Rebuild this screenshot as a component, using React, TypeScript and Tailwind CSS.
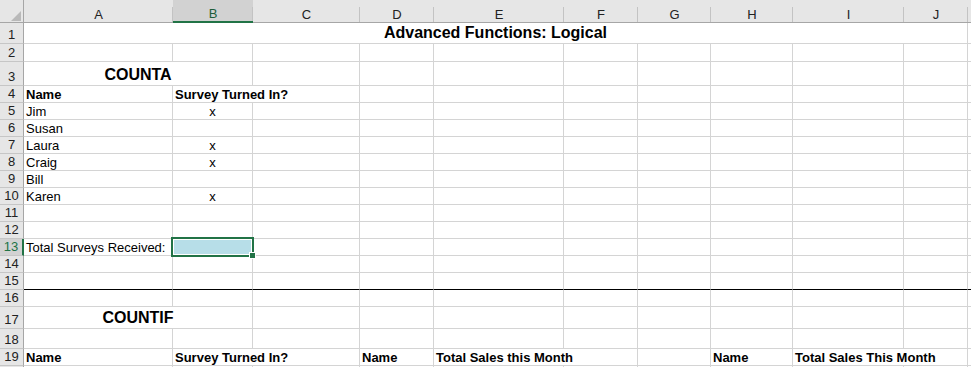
import React from 'react';

type Cell = { text?: string; span?: number; bold?: boolean; center?: boolean; big?: boolean };

const COLS = ['A', 'B', 'C', 'D', 'E', 'F', 'G', 'H', 'I', 'J', ''];

const SPAN: Record<number, string> = {
  1: 'col-span-1',
  2: 'col-span-2',
  10: 'col-span-10',
};

// row heights include the 1px bottom gridline
const ROWS: { h: string; cells: Record<number, Cell> }[] = [
  { h: 'h-[21px]', cells: { 0: { text: 'Advanced Functions: Logical', span: 10, bold: true, center: true, big: true } } },
  { h: 'h-[18px]', cells: {} },
  { h: 'h-[24px]', cells: { 0: { text: 'COUNTA', span: 2, bold: true, center: true, big: true } } },
  { h: 'h-[17px]', cells: { 0: { text: 'Name', bold: true }, 1: { text: 'Survey Turned In?', span: 2, bold: true } } },
  { h: 'h-[17px]', cells: { 0: { text: 'Jim' }, 1: { text: 'x', center: true } } },
  { h: 'h-[17px]', cells: { 0: { text: 'Susan' } } },
  { h: 'h-[17px]', cells: { 0: { text: 'Laura' }, 1: { text: 'x', center: true } } },
  { h: 'h-[17px]', cells: { 0: { text: 'Craig' }, 1: { text: 'x', center: true } } },
  { h: 'h-[17px]', cells: { 0: { text: 'Bill' } } },
  { h: 'h-[17px]', cells: { 0: { text: 'Karen' }, 1: { text: 'x', center: true } } },
  { h: 'h-[17px]', cells: {} },
  { h: 'h-[17px]', cells: {} },
  { h: 'h-[17px]', cells: { 0: { text: 'Total Surveys Received:' } } },
  { h: 'h-[17px]', cells: {} },
  { h: 'h-[17px]', cells: {} },
  { h: 'h-[17px]', cells: {} },
  { h: 'h-[22px]', cells: { 0: { text: 'COUNTIF', span: 2, bold: true, center: true, big: true } } },
  { h: 'h-[20px]', cells: {} },
  {
    h: 'h-[17px]',
    cells: {
      0: { text: 'Name', bold: true },
      1: { text: 'Survey Turned In?', span: 2, bold: true },
      3: { text: 'Name', bold: true },
      4: { text: 'Total Sales this Month', span: 2, bold: true },
      7: { text: 'Name', bold: true },
      8: { text: 'Total Sales This Month', span: 2, bold: true },
    },
  },
  { h: 'h-[17px]', cells: {} },
];

const SEL_ROW = 13;
const SEL_COL = 1;
const VISIBLE_ROWS = 19; // row 20 only peeks in at the bottom edge

function ColHeader({ label, active }: { label: string; active: boolean }) {
  return (
    <div
      className={`relative flex items-end justify-center h-[23px] text-[13px] leading-[15px] ${
        active
          ? 'bg-[#d2d2d2] border-b-2 border-[#217346] text-[#1e5e3a]'
          : 'bg-[#e6e6e6] border-b border-[#a6a6a6] text-[#222]'
      }`}
    >
      <span>{label}</span>
      <span className="absolute right-0 top-[7px] bottom-0 w-px bg-[#c3c3c3]" />
    </div>
  );
}

export default function App() {
  return (
    <div className="relative w-[971px] h-[367px] overflow-hidden bg-white font-['Liberation_Sans',Arial,sans-serif]">
      <div className="grid grid-cols-[24px_149px_80px_107px_74px_130px_74px_73px_82px_111px_64px_1fr]">
        {/* corner */}
        <div className="relative h-[23px] bg-[#e6e6e6] border-b border-r border-[#a6a6a6]">
          <svg className="absolute left-[11px] top-[11px]" width="11" height="11" viewBox="0 0 11 11">
            <polygon points="10,0 10,10 0,10" fill="#b9b9b9" />
          </svg>
        </div>
        {COLS.map((c, i) => (
          <ColHeader key={i} label={c} active={i === SEL_COL} />
        ))}

        {ROWS.map((row, r) => {
          const rowNum = r + 1;
          const out: React.ReactNode[] = [];
          const sel = rowNum === SEL_ROW;
          out.push(
            <div
              key={`h${r}`}
              className={`flex items-end justify-center pb-[1px] text-[13px] leading-[15px] border-b border-[#c6c6c6] ${row.h} ${
                sel
                  ? 'bg-[#d2d2d2] text-[#217346] border-r-2 border-r-[#217346]'
                  : 'bg-[#e6e6e6] text-[#222] border-r border-r-[#a6a6a6]'
              }`}
            >
              {rowNum <= VISIBLE_ROWS ? rowNum : ''}
            </div>
          );
          let i = 0;
          while (i < COLS.length) {
            const cell = row.cells[i] || {};
            const span = cell.span || 1;
            const divider = rowNum === 15 ? 'border-b-black' : 'border-b-[#d4d4d4]';
            const fill = sel && i === SEL_COL ? 'bg-[#b7dee8]' : '';
            out.push(
              <div
                key={`${r}-${i}`}
                className={`flex items-end px-[2px] whitespace-nowrap overflow-hidden text-black border-r border-r-[#d4d4d4] border-b ${divider} ${row.h} ${
                  SPAN[span]
                } ${fill} ${cell.center ? 'justify-center' : ''} ${
                  cell.big ? 'text-[16px] leading-[18px] pb-[1px]' : 'text-[13px] leading-[15px]'
                } ${cell.bold ? 'font-bold' : ''}`}
              >
                {cell.text}
              </div>
            );
            i += span;
          }
          return out;
        })}
      </div>

      {/* active cell B13 */}
      <div className="absolute left-[171px] top-[237px] w-[83px] h-[20px] border-2 border-[#217346] shadow-[inset_0_0_0_1px_#ffffff]">
        <div className="absolute right-[-4px] bottom-[-4px] w-[7px] h-[7px] bg-[#217346] border border-white" />
      </div>
    </div>
  );
}
